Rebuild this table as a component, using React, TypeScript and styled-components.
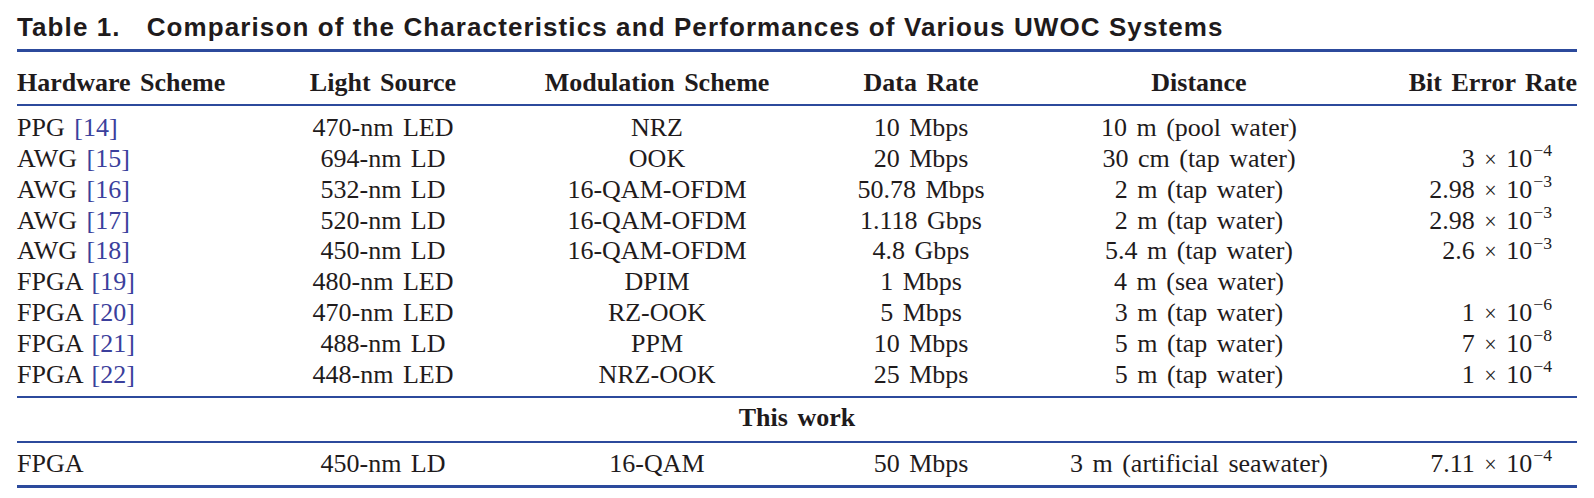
import React from 'react';
import styled, { createGlobalStyle } from 'styled-components';

const GlobalStyle = createGlobalStyle`
  html, body {
    margin: 0;
    padding: 0;
    background: #ffffff;
  }
`;

const RULE = '#2c4a9c';
const INK = '#1f1b1c';
const COLUMNS = '243px 246px 302px 226px 330px 213px';

const Page = styled.div`
  width: 1560px;
  padding: 0 17px;
  color: ${INK};
`;

const Caption = styled.div`
  font-family: 'Liberation Sans', Arial, sans-serif;
  font-weight: bold;
  font-size: 26px;
  line-height: 30px;
  letter-spacing: 1.1px;
  padding: 12px 0 7px;
  border-bottom: 3px solid ${RULE};
  white-space: nowrap;
`;

const CaptionLabel = styled.span`
  margin-right: 26px;
`;

const Section = styled.div<{ $top: number; $bottom: number; $rule: number }>`
  padding: ${({ $top, $bottom }) => `${$top}px 0 ${$bottom}px`};
  border-bottom: ${({ $rule }) => $rule}px solid ${RULE};
`;

const Row = styled.div<{ $bold?: boolean }>`
  display: grid;
  grid-template-columns: ${COLUMNS};
  font-family: 'Liberation Serif', 'Times New Roman', serif;
  font-size: 26px;
  line-height: 30.8px;
  font-weight: ${({ $bold }) => ($bold ? 'bold' : 'normal')};
  word-spacing: 3px;
  white-space: nowrap;
`;

const Cell = styled.div<{ $align?: 'left' | 'center' | 'right'; $padRight?: number }>`
  text-align: ${({ $align }) => $align || 'center'};
  padding-right: ${({ $padRight }) => $padRight || 0}px;
`;

const Banner = styled.div`
  font-family: 'Liberation Serif', 'Times New Roman', serif;
  font-size: 26px;
  line-height: 30.8px;
  font-weight: bold;
  text-align: center;
  word-spacing: 3px;
`;

const Ref = styled.span`
  color: #3b3f9c;
`;

const Times = styled.span`
  font-size: 0.85em;
  line-height: 0;
`;

const Exp = styled.sup`
  font-size: 0.68em;
  line-height: 0;
  vertical-align: 0.62em;
  margin-left: 1px;
`;

type Ber = [string, string] | null;
type Entry = [string, string | null, string, string, string, string, Ber];

const rows: Entry[] = [
  ['PPG', '14', '470-nm LED', 'NRZ', '10 Mbps', '10 m (pool water)', null],
  ['AWG', '15', '694-nm LD', 'OOK', '20 Mbps', '30 cm (tap water)', ['3', '4']],
  ['AWG', '16', '532-nm LD', '16-QAM-OFDM', '50.78 Mbps', '2 m (tap water)', ['2.98', '3']],
  ['AWG', '17', '520-nm LD', '16-QAM-OFDM', '1.118 Gbps', '2 m (tap water)', ['2.98', '3']],
  ['AWG', '18', '450-nm LD', '16-QAM-OFDM', '4.8 Gbps', '5.4 m (tap water)', ['2.6', '3']],
  ['FPGA', '19', '480-nm LED', 'DPIM', '1 Mbps', '4 m (sea water)', null],
  ['FPGA', '20', '470-nm LED', 'RZ-OOK', '5 Mbps', '3 m (tap water)', ['1', '6']],
  ['FPGA', '21', '488-nm LD', 'PPM', '10 Mbps', '5 m (tap water)', ['7', '8']],
  ['FPGA', '22', '448-nm LED', 'NRZ-OOK', '25 Mbps', '5 m (tap water)', ['1', '4']],
];

const thisWork: Entry = ['FPGA', null, '450-nm LD', '16-QAM', '50 Mbps', '3 m (artificial seawater)', ['7.11', '4']];

const BerValue: React.FC<{ value: Ber }> = ({ value }) =>
  value ? (
    <>
      {value[0]} <Times>×</Times> 10<Exp>−{value[1]}</Exp>
    </>
  ) : null;

const DataRow: React.FC<{ entry: Entry }> = ({ entry }) => {
  const [hw, ref, light, mod, rate, dist, ber] = entry;
  return (
    <Row>
      <Cell $align="left">
        {hw}
        {ref && <> <Ref>[{ref}]</Ref></>}
      </Cell>
      <Cell>{light}</Cell>
      <Cell>{mod}</Cell>
      <Cell>{rate}</Cell>
      <Cell>{dist}</Cell>
      <Cell $align="right" $padRight={25}>
        <BerValue value={ber} />
      </Cell>
    </Row>
  );
};

const App: React.FC = () => (
  <Page>
    <GlobalStyle />
    <Caption>
      <CaptionLabel>Table 1.</CaptionLabel>
      Comparison of the Characteristics and Performances of Various UWOC Systems
    </Caption>
    <Section $top={15.5} $bottom={6} $rule={2}>
      <Row $bold>
        <Cell $align="left">Hardware Scheme</Cell>
        <Cell>Light Source</Cell>
        <Cell>Modulation Scheme</Cell>
        <Cell>Data Rate</Cell>
        <Cell>Distance</Cell>
        <Cell $align="right">Bit Error Rate</Cell>
      </Row>
    </Section>
    <Section $top={7} $bottom={5.7} $rule={2}>
      {rows.map((entry, i) => (
        <DataRow key={i} entry={entry} />
      ))}
    </Section>
    <Section $top={4.8} $bottom={7.4} $rule={2}>
      <Banner>This work</Banner>
    </Section>
    <Section $top={6.3} $bottom={4.4} $rule={3}>
      <DataRow entry={thisWork} />
    </Section>
  </Page>
);

export default App;
